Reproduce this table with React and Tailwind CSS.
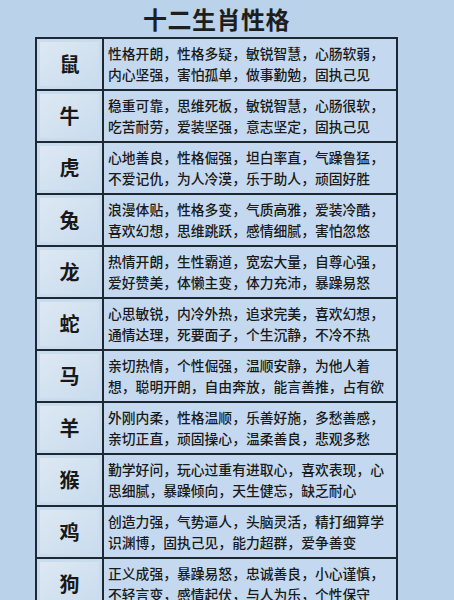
const rows = [
  ["鼠", "性格开朗，性格多疑，敏锐智慧，心肠软弱，内心坚强，害怕孤单，做事勤勉，固执己见"],
  ["牛", "稳重可靠，思维死板，敏锐智慧，心肠很软，吃苦耐劳，爱装坚强，意志坚定，固执己见"],
  ["虎", "心地善良，性格倔强，坦白率直，气躁鲁猛，不爱记仇，为人冷漠，乐于助人，顽固好胜"],
  ["兔", "浪漫体贴，性格多变，气质高雅，爱装冷酷，喜欢幻想，思维跳跃，感情细腻，害怕忽悠"],
  ["龙", "热情开朗，生性霸道，宽宏大量，自尊心强，爱好赞美，体懒主变，体力充沛，暴躁易怒"],
  ["蛇", "心思敏锐，内冷外热，追求完美，喜欢幻想，通情达理，死要面子，个生沉静，不冷不热"],
  ["马", "亲切热情，个性倔强，温顺安静，为他人着想，聪明开朗，自由奔放，能言善推，占有欲强"],
  ["羊", "外刚内柔，性格温顺，乐善好施，多愁善感，亲切正直，顽固操心，温柔善良，悲观多愁"],
  ["猴", "勤学好问，玩心过重有进取心，喜欢表现，心思细腻，暴躁倾向，天生健忘，缺乏耐心"],
  ["鸡", "创造力强，气势逼人，头脑灵活，精打细算学识渊博，固执己见，能力超群，爱争善变"],
  ["狗", "正义成强，暴躁易怒，忠诚善良，小心谨慎，不轻言变，感情起伏，与人为乐，个性保守"],
  ["猪", "真诚坦率，乐观豁达，待人宽厚，随遇而安，意志薄弱，容易冲动，贪图享乐，缺乏主见"],
];

export default function App() {
  return (
    <div
      className="h-[600px] w-[454px] overflow-hidden bg-[#bad2ea] text-[#1b1b1b]"
      style={{ fontFamily: '"Noto Sans CJK SC", "Noto Sans", sans-serif' }}
    >
      <div className="ml-[35px] w-[363px]">
        <h1 className="flex h-[37px] items-center justify-center text-[24px] font-bold tracking-[0.5px] text-[#1e1e1e]">
          十二生肖性格
        </h1>
        <div className="border-2 border-b-0 border-[#1d2833] bg-[#c4d9ef]">
          {rows.map(([animal, text]) => (
            <div key={animal} className="flex h-[52px] border-b-2 border-[#1d2833]">
              <div className="w-[67px] shrink-0 border-r-2 border-[#1d2833] bg-[#c9dcee] p-[3px]">
                <div className="flex h-full items-center justify-center bg-gradient-to-br from-[#dde8f3] via-[#d3e2f0] to-[#c8dbee] text-[20px] font-bold text-[#181818]">
                  {animal}
                </div>
              </div>
              <div className="flex-1 overflow-hidden pl-[4px] pr-[6px] pt-[4px] text-[13.8px] font-medium leading-[21px] text-[#1a1a1a]">
                {text}
              </div>
            </div>
          ))}
        </div>
      </div>
    </div>
  );
}
